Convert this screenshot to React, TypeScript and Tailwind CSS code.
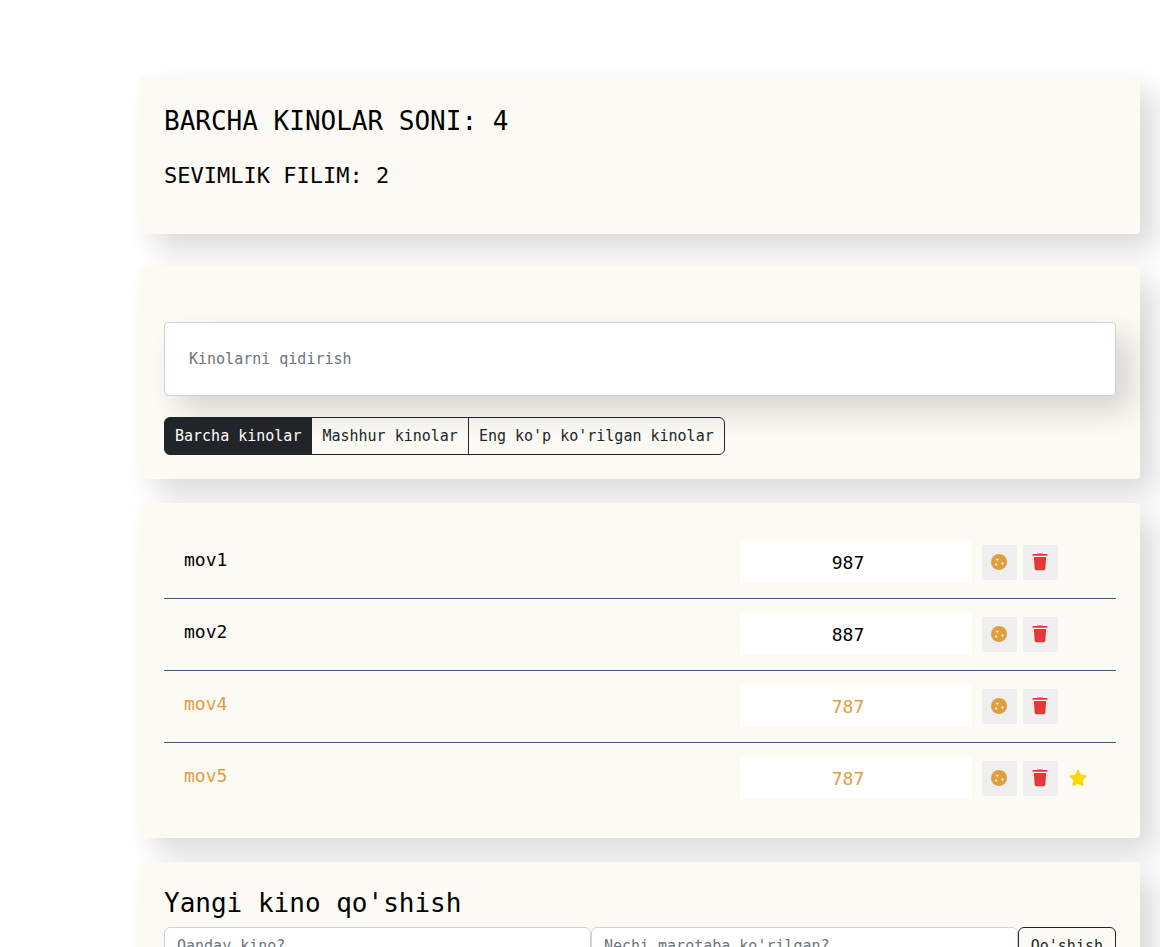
import { useState } from "react";
import { FaStar } from "react-icons/fa";

type Movie = { id: number; name: string; views: number; favourite: boolean; liked: boolean };

const initialMovies: Movie[] = [
  { id: 1, name: "mov1", views: 987, favourite: false, liked: false },
  { id: 2, name: "mov2", views: 887, favourite: false, liked: false },
  { id: 3, name: "mov4", views: 787, favourite: true, liked: false },
  { id: 4, name: "mov5", views: 787, favourite: true, liked: true },
];

const filters = ["Barcha kinolar", "Mashhur kinolar", "Eng ko'p ko'rilgan kinolar"];

const card = "rounded bg-[#fcfaf5] px-6 shadow-[15px_15px_30px_rgba(0,0,0,0.15)]";
const field =
  "h-[38px] min-w-0 flex-1 rounded-md border border-[#ced4da] bg-white px-3 text-[#212529] outline-none placeholder:text-[#6c757d]";
const iconButton = "flex size-[35px] items-center justify-center bg-[#efefef] pr-px pb-px";

function CookieIcon() {
  return (
    <svg viewBox="0 0 16 16" className="size-4" aria-hidden="true">
      <path
        fill="currentColor"
        d="M8 0 10.9.4 13.6 2.1 15.4 4.8 16 8 15.5 11 13.7 13.8 11 15.5 8 16 5 15.5 2.2 13.8.5 11 0 8 .6 5 2.3 2.2 5 .5Z"
      />
      <g fill="#efefef">
        <circle cx="6.3" cy="5.5" r="1.1" />
        <circle cx="5.2" cy="10.5" r="1.1" />
        <circle cx="11.4" cy="9.5" r="1.1" />
      </g>
    </svg>
  );
}

function TrashIcon() {
  return (
    <svg viewBox="0 0 16 18" className="h-[18px] w-4" fill="currentColor" aria-hidden="true">
      <path d="M5.4 1 5.8.4h4.4l.4.6H15a.5.5 0 0 1 .5.5v.8a.5.5 0 0 1-.5.5H1a.5.5 0 0 1-.5-.5v-.8A.5.5 0 0 1 1 1Z" />
      <path d="M1.8 4h12.4l-.9 12.1a1.3 1.3 0 0 1-1.3 1.1H4a1.3 1.3 0 0 1-1.3-1.1Z" />
    </svg>
  );
}

function MovieRow({ movie }: { movie: Movie }) {
  return (
    <li
      className={`flex items-start border-b border-[#3d5a80] px-5 py-[15px] text-[18px] last:border-b-0 ${
        movie.favourite ? "text-[#e09f3e]" : "text-black"
      }`}
    >
      <span className="flex-1 leading-9">{movie.name}</span>
      <input
        aria-label={`${movie.name} ko'rilgan`}
        defaultValue={movie.views}
        className="mr-2.5 h-[41px] w-[232px] bg-white pr-4 text-center outline-none"
      />
      <div className="flex items-center gap-[3px] pt-[3px]">
        <div className="flex gap-1.5">
          <button type="button" aria-label="Sevimli" className={`${iconButton} text-[#e09f3e]`}>
            <CookieIcon />
          </button>
          <button type="button" aria-label="O'chirish" className={`${iconButton} text-[#e5383b]`}>
            <TrashIcon />
          </button>
        </div>
        <span
          className={`flex size-[35px] items-center justify-center pr-px pb-px text-[#ffd700] ${
            movie.liked ? "" : "invisible"
          }`}
        >
          <FaStar />
        </span>
      </div>
    </li>
  );
}

export default function App() {
  const [active, setActive] = useState(0);

  return (
    <main className="flex min-h-screen flex-col gap-6 bg-white pt-[76px] pr-5 pb-20 pl-[140px] font-['DejaVu_Sans_Mono',monospace] text-[15px] leading-6 text-[#212529]">
      <section className={`${card} mb-2 pt-7 pb-11 text-black uppercase`}>
        <h1 className="text-[26px] leading-[34px]">Barcha kinolar soni: 4</h1>
        <h2 className="mt-6 text-[22px] leading-7">Sevimlik filim: 2</h2>
      </section>

      <section className={`${card} pt-14 pb-6`}>
        <input
          type="text"
          aria-label="Kinolarni qidirish"
          placeholder="Kinolarni qidirish"
          className="block w-full rounded border border-[#ced4da] bg-white p-6 shadow-[15px_15px_30px_rgba(0,0,0,0.15)] outline-none placeholder:text-[#6c757d]"
        />
        <div className="mt-[21px] flex">
          {filters.map((label, i) => (
            <button
              key={label}
              type="button"
              onClick={() => setActive(i)}
              className={`-ml-px h-[38px] border border-[#212529] px-2.5 first:ml-0 first:rounded-l-md last:rounded-r-md ${
                active === i ? "bg-[#212529] text-white" : "text-[#212529]"
              }`}
            >
              {label}
            </button>
          ))}
        </div>
      </section>

      <section className={`${card} py-6`}>
        <ul>
          {initialMovies.map((movie) => (
            <MovieRow key={movie.id} movie={movie} />
          ))}
        </ul>
      </section>

      <section className={`${card} py-6`}>
        <h3 className="mb-[7px] text-[26px] leading-[34px] text-black">Yangi kino qo'shish</h3>
        <form className="flex" onSubmit={(e) => e.preventDefault()}>
          <input type="text" aria-label="Qanday kino?" placeholder="Qanday kino?" className={field} />
          <input
            type="text"
            aria-label="Nechi marotaba ko'rilgan?"
            placeholder="Nechi marotaba ko'rilgan?"
            className={field}
          />
          <button type="submit" className="h-[38px] rounded-md border border-[#212529] px-3 text-[#212529]">
            Qo'shish
          </button>
        </form>
      </section>
    </main>
  );
}
